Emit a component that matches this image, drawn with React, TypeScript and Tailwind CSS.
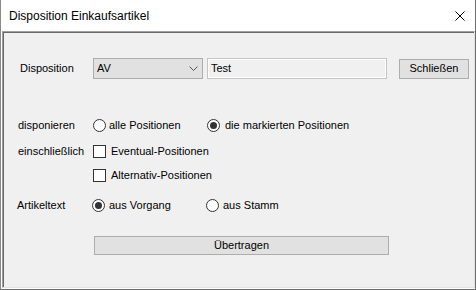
import React, { useState } from "react";

const font = { fontFamily: '"Liberation Sans", Arial, sans-serif' };

const Radio = ({ checked, onClick }: { checked: boolean; onClick: () => void }) => (
    <span
        onClick={onClick}
        className="w-[13px] h-[13px] rounded-full border border-[#333333] bg-white flex items-center justify-center shrink-0"
    >
        {checked && <span className="w-[7px] h-[7px] rounded-full bg-[#333333]" />}
    </span>
);

const Check = ({ checked, onClick }: { checked: boolean; onClick: () => void }) => (
    <span
        onClick={onClick}
        className="w-[13px] h-[13px] border border-[#333333] bg-white flex items-center justify-center shrink-0 text-[10px] leading-none"
    >
        {checked ? "✓" : ""}
    </span>
);

const App = () => {
    const [alle, setAlle] = useState<boolean>(false);
    const [eventual, setEventual] = useState<boolean>(false);
    const [alternativ, setAlternativ] = useState<boolean>(false);
    const [vorgang, setVorgang] = useState<boolean>(true);

    return (
        <div
            className="w-[476px] h-[290px] bg-white border-l border-r border-b border-l-[#8a8a8a] border-r-[#6b6b6b] border-b-[#6b6b6b] flex flex-col text-black"
            style={font}
        >
            {/* Titelleiste */}
            <div className="h-[31px] flex items-center justify-between pl-[8px] pr-[10px] shrink-0">
                <span className="text-[12px]">Disposition Einkaufsartikel</span>
                <svg width="10" height="10" viewBox="0 0 10 10">
                    <path d="M0.5 0.5 L9.5 9.5 M9.5 0.5 L0.5 9.5" stroke="#000" strokeWidth="1" />
                </svg>
            </div>

            <div className="flex-1 ml-[1px] mb-[1px] border-t border-l border-t-[#a0a0a0] border-l-[#a0a0a0] border-r border-b border-r-[#e3e3e3] border-b-[#e3e3e3] flex">
                <div className="flex-1 border-t border-l border-t-[#696969] border-l-[#696969] bg-[#f0f0f0] pt-[25px] pl-[14px] text-[11px] flex flex-col">
                    {/* Disposition */}
                    <div className="flex items-center h-[21px]">
                        <span className="w-[73px] ml-[2px]">Disposition</span>
                        <div className="w-[110px] h-[21px] bg-[#e1e1e1] border border-[#adadad] flex items-center justify-between pl-[3px] pr-[4px]">
                            <span>AV</span>
                            <svg width="9" height="5" viewBox="0 0 9 5">
                                <path d="M0.5 0.5 L4.5 4.5 L8.5 0.5" stroke="#555" strokeWidth="1" fill="none" />
                            </svg>
                        </div>
                        <div className="ml-[4px] w-[180px] h-[21px] bg-[#f0f0f0] border border-[#c4c4c4] shadow-[inset_0_0_0_1px_#ffffff] flex items-center pl-[3px]">
                            Test
                        </div>
                        <button className="ml-[12px] w-[70px] h-[20px] bg-[#e1e1e1] border border-[#adadad] flex items-center justify-center">
                            Schließen
                        </button>
                    </div>

                    {/* disponieren */}
                    <div className="flex items-center h-[16px] mt-[38px]">
                        <span className="w-[75px]">disponieren</span>
                        <div className="w-[114px] flex items-center gap-[3px]">
                            <Radio checked={alle} onClick={() => setAlle(true)} />
                            <span>alle Positionen</span>
                        </div>
                        <div className="flex items-center gap-[5px]">
                            <Radio checked={!alle} onClick={() => setAlle(false)} />
                            <span>die markierten Positionen</span>
                        </div>
                    </div>

                    {/* einschließlich */}
                    <div className="flex items-center h-[16px] mt-[10px]">
                        <span className="w-[75px]">einschließlich</span>
                        <div className="flex items-center gap-[5px]">
                            <Check checked={eventual} onClick={() => setEventual(!eventual)} />
                            <span>Eventual-Positionen</span>
                        </div>
                    </div>
                    <div className="flex items-center h-[16px] mt-[8px] pl-[75px]">
                        <div className="flex items-center gap-[5px]">
                            <Check checked={alternativ} onClick={() => setAlternativ(!alternativ)} />
                            <span>Alternativ-Positionen</span>
                        </div>
                    </div>

                    {/* Artikeltext */}
                    <div className="flex items-center h-[16px] mt-[14px]">
                        <span className="w-[74px] -ml-[1px] mr-[1px]">Artikeltext</span>
                        <div className="w-[114px] flex items-center gap-[4px]">
                            <Radio checked={vorgang} onClick={() => setVorgang(true)} />
                            <span>aus Vorgang</span>
                        </div>
                        <div className="flex items-center gap-[4px]">
                            <Radio checked={!vorgang} onClick={() => setVorgang(false)} />
                            <span>aus Stamm</span>
                        </div>
                    </div>

                    <div className="pl-[76px] mt-[23px]">
                        <button className="w-[295px] h-[19px] bg-[#e1e1e1] border border-[#adadad] flex items-center justify-center">
                            Übertragen
                        </button>
                    </div>
                </div>
            </div>
        </div>
    );
};

export default App;
